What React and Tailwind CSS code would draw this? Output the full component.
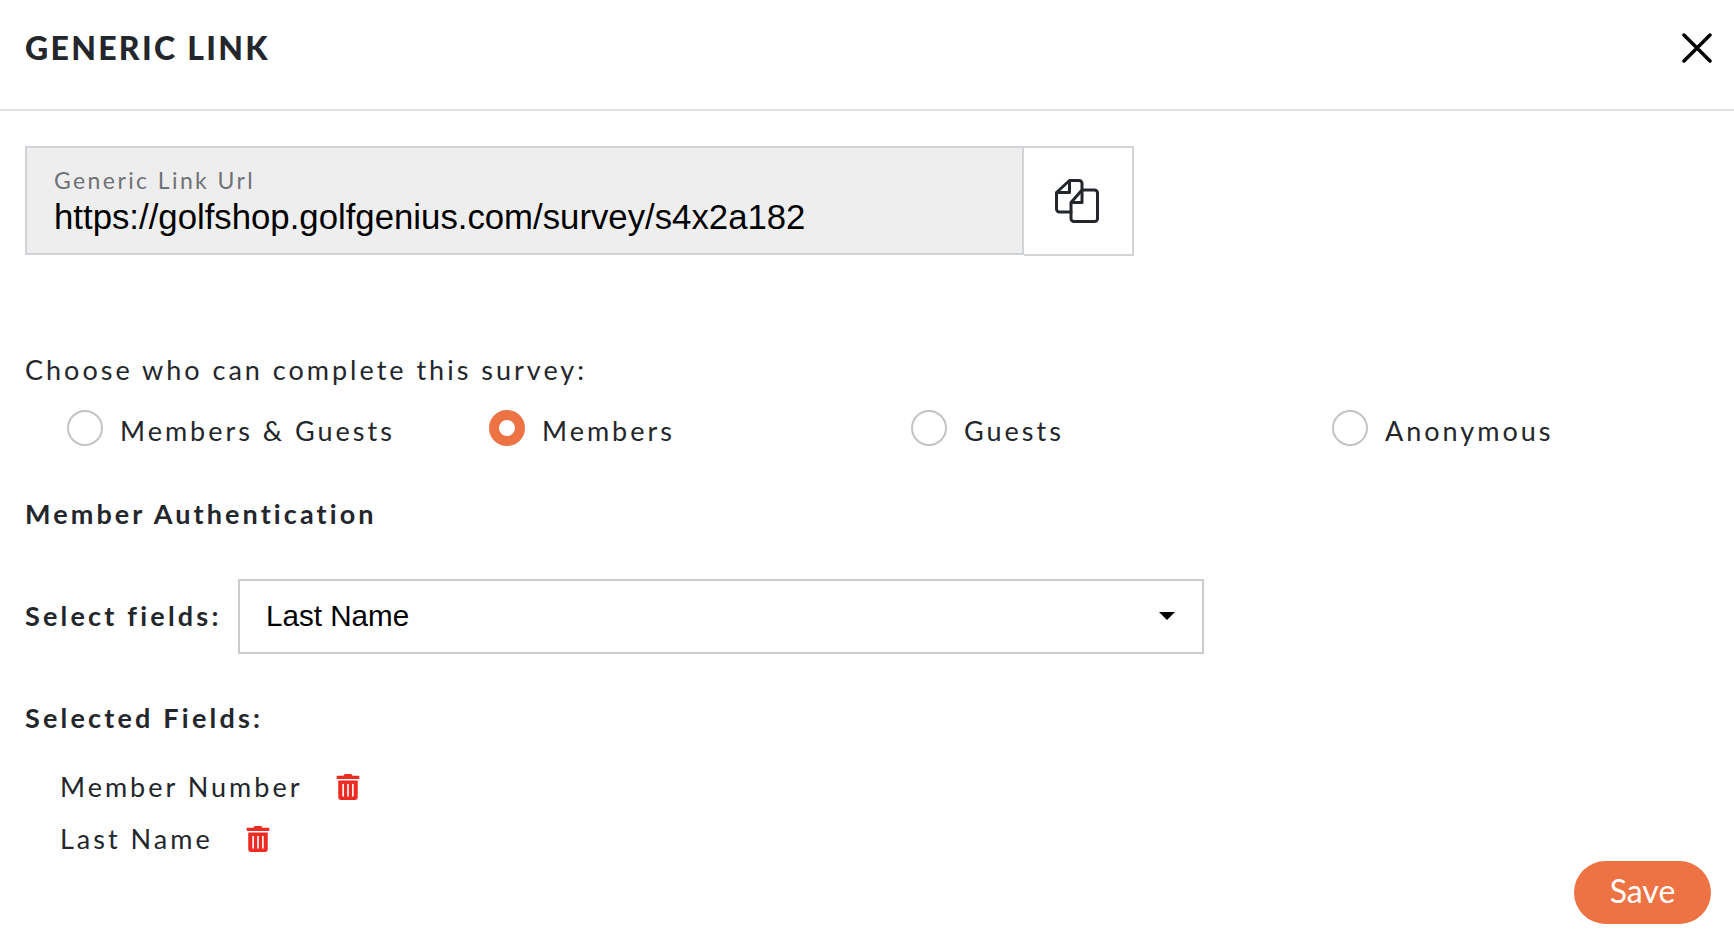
import { FaTrashAlt } from "react-icons/fa";

const audiences = [
  { label: "Members & Guests", checked: false, width: "w-[422px]" },
  { label: "Members", checked: true, width: "w-[422px]" },
  { label: "Guests", checked: false, width: "w-[421px]" },
  { label: "Anonymous", checked: false, width: "" },
];

const selectedFields = ["Member Number", "Last Name"];

function CopyIcon() {
  return (
    <svg width="44" height="44" viewBox="0 0 44 44" fill="none" stroke="#23262b" strokeWidth="3" strokeLinejoin="round" strokeLinecap="round">
      <path d="M27 10V4.5a3 3 0 0 0-3-3H14.5L1.5 13.5V30a3 3 0 0 0 3 3H16" />
      <path d="M14.5 2V13.5H2" />
      <path d="M27 11H39.5a3 3 0 0 1 3 3V39.5a3 3 0 0 1-3 3H19a3 3 0 0 1-3-3V23.5Z" />
      <path d="M27 11.5V23.5H16.5" />
    </svg>
  );
}

function CloseIcon() {
  return (
    <svg width="30" height="30" viewBox="0 0 30 30" stroke="#000" strokeWidth="3.5" strokeLinecap="round">
      <path d="M2 2L28 28M28 2L2 28" />
    </svg>
  );
}

function Radio({ label, checked, width }) {
  return (
    <div className={`flex items-center ${width}`}>
      {checked ? (
        <span className="w-[36px] h-[36px] rounded-full border-[10px] border-[#ee7344] bg-white shrink-0" />
      ) : (
        <span className="w-[36px] h-[36px] rounded-full border-2 border-[#c4c4c4] bg-white shrink-0" />
      )}
      <span className="ml-[17px] mt-[6px] text-[27px] leading-[36px] tracking-[3px] text-[#23262b]">{label}</span>
    </div>
  );
}

export default function App() {
  return (
    <div className="w-[1734px] h-[950px] bg-white overflow-hidden font-['Lato','Open_Sans',sans-serif]">
      <div className="h-[111px] border-b-2 border-[#dfe2e5] flex items-center justify-between pl-[25px] pr-[22px]">
        <h1 className="text-[32px] leading-[40px] font-black tracking-[2.3px] text-[#23262b] -mt-[14px]">GENERIC LINK</h1>
        <button className="-mt-[13px]"><CloseIcon /></button>
      </div>

      <div className="pl-[25px] pt-[35px]">
        <div className="flex w-[1109px] h-[110px]">
          <div className="w-[999px] h-[109px] bg-[#eeeeee] border-2 border-[#d0d4d8] pl-[27px] pt-[18px]">
            <div className="text-[23px] leading-[28px] tracking-[2.4px] text-[#6f7276]">Generic Link Url</div>
            <div className="mt-[3px] text-[34.75px] leading-[40px] text-black font-['Liberation_Sans',sans-serif]">https://golfshop.golfgenius.com/survey/s4x2a182</div>
          </div>
          <button className="w-[110px] h-[110px] bg-white border-2 border-l-0 border-[#d4d4d4] flex items-center justify-center pr-[2px]">
            <CopyIcon />
          </button>
        </div>

        <p className="mt-[96px] text-[27px] leading-[36px] tracking-[3px] text-[#23262b]">Choose who can complete this survey:</p>

        <div className="flex mt-[19px] pl-[42px]">
          {audiences.map((a) => (
            <Radio key={a.label} label={a.label} checked={a.checked} width={a.width} />
          ))}
        </div>

        <h2 className="mt-[47px] text-[27px] leading-[36px] font-bold tracking-[3.1px] text-[#23262b]">Member Authentication</h2>

        <div className="flex items-center mt-[47px]">
          <label className="w-[213px] -mt-[2px] text-[27px] leading-[36px] font-bold tracking-[3.2px] text-[#23262b]">Select fields:</label>
          <div className="w-[966px] h-[75px] border-2 border-[#cccccc] flex items-center justify-between pl-[26px] pr-[27px]">
            <span className="text-[29.6px] text-black font-['Liberation_Sans',sans-serif]">Last Name</span>
            <span className="w-0 h-0 -mt-[1px] border-x-[8px] border-x-transparent border-t-[8px] border-t-black" />
          </div>
        </div>

        <h2 className="mt-[46px] text-[27px] leading-[36px] font-bold tracking-[3.2px] text-[#23262b]">Selected Fields:</h2>

        <ul className="mt-[33px] pl-[35px] flex flex-col gap-[16px]">
          {selectedFields.map((f) => (
            <li key={f} className="flex items-center h-[36px]">
              <span className="text-[27px] leading-[36px] tracking-[3px] text-[#23262b]">{f}</span>
              <FaTrashAlt className="ml-[32px] text-[26px] text-[#ec2c22]" />
            </li>
          ))}
        </ul>
      </div>

      <div className="flex justify-end pr-[23px] mt-[4px]">
        <button className="w-[137px] h-[63px] pb-[3px] rounded-full bg-[#ee7344] text-white text-[32px]">Save</button>
      </div>
    </div>
  );
}
